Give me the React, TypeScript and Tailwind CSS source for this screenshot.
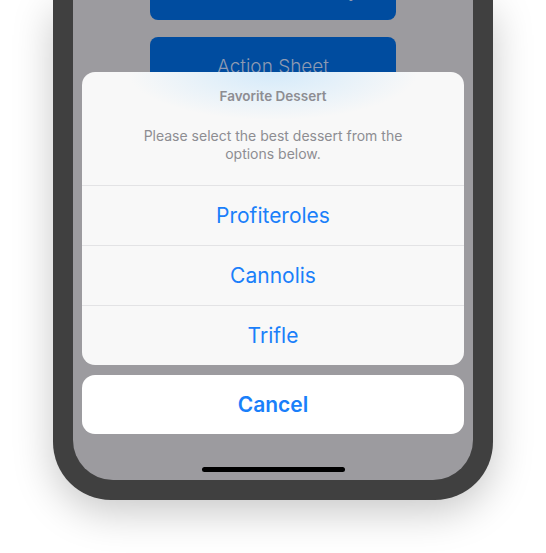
import React from 'react';

const font = { fontFamily: 'Inter, "Liberation Sans", sans-serif' };

const OPTIONS = ['Profiteroles', 'Cannolis', 'Trifle'];

const App = () => {
  return (
    <div className="w-[546px] h-[553px] bg-white overflow-hidden" style={font}>
      <div className="ml-[53px] w-[440px] h-[500px] bg-[#404040] rounded-b-[58px] px-[20px] pb-[20px] shadow-[0_12px_40px_rgba(0,0,0,0.22)]">
        <div className="relative h-full bg-[#9c9b9f] rounded-b-[40px] overflow-hidden">
          {/* app buttons behind the dimmed backdrop */}
          <div className="flex flex-col items-center gap-[17px] mt-[-38px]">
            <div className="w-[246px] h-[58px] rounded-[8px] bg-[#004c9f] flex items-center justify-center text-[19px] font-light text-[#8e9ab2]">
              Show Alert Modally
            </div>
            <div className="w-[246px] h-[58px] rounded-[8px] bg-[#004c9f] flex items-center justify-center pt-[2px] text-[19px] font-light text-[#8e9ab2]">
              Action Sheet
            </div>
          </div>

          {/* action sheet */}
          <div className="absolute left-[9px] right-[9px] top-[72px] flex flex-col gap-[10px]">
            <div className="rounded-[13px] bg-[#f8f8f8] bg-[radial-gradient(ellipse_145px_48px_at_50%_0px,rgba(212,234,250,1),rgba(248,248,248,0))] overflow-hidden">
              <div className="pt-[15px] pb-[22px] px-[55px] flex flex-col items-center text-center">
                <div className="text-[13.5px] leading-[18px] font-semibold text-[#8d8d92]">Favorite Dessert</div>
                <div className="mt-[22px] text-[14px] leading-[18px] text-[#8d8d92]">
                  Please select the best dessert from the options below.
                </div>
              </div>
              {OPTIONS.map((o) => (
                <div
                  key={o}
                  className="h-[60px] border-t border-[#e3e3e5] pt-[1px] flex items-center justify-center text-[21px] text-[#1a7ffa]"
                >
                  {o}
                </div>
              ))}
            </div>
            <div className="h-[59px] rounded-[13px] bg-white flex items-center justify-center text-[21px] font-semibold text-[#1a7ffa]">
              Cancel
            </div>
          </div>

          {/* home indicator */}
          <div className="absolute bottom-[8px] left-[129px] w-[143px] h-[5px] rounded-full bg-black" />
        </div>
      </div>
    </div>
  );
};

export default App;
